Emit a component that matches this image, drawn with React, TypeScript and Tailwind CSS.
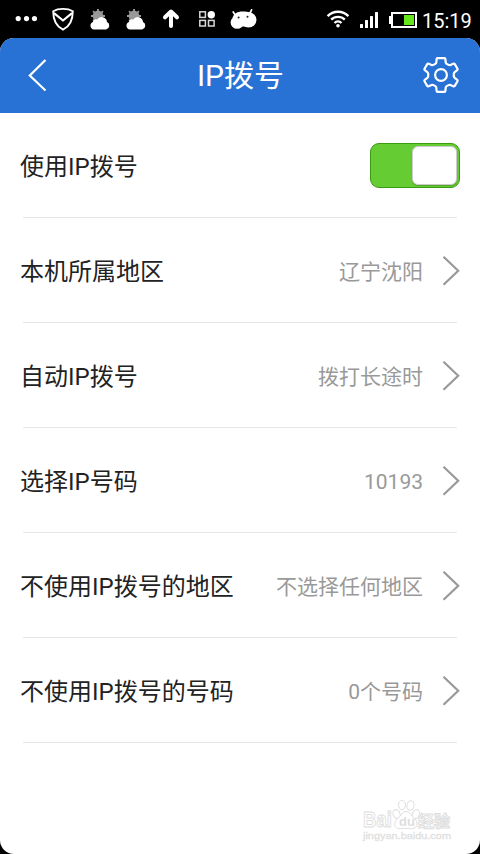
import { ReactNode } from "react";

type Row = {
  label: string;
  value?: string;
};

const rows: Row[] = [
  { label: "使用IP拨号" },
  { label: "本机所属地区", value: "辽宁沈阳" },
  { label: "自动IP拨号", value: "拨打长途时" },
  { label: "选择IP号码", value: "10193" },
  { label: "不使用IP拨号的地区", value: "不选择任何地区" },
  { label: "不使用IP拨号的号码", value: "0个号码" },
];

function WeatherIcon() {
  return (
    <svg width="20" height="22" viewBox="0 0 20 22" className="ml-4">
      <circle cx="8" cy="8" r="5.4" fill="#999" />
      <path
        d="M8 1v14M1 8h14M3.050 3.050l9.900 9.900M3.050 12.950l9.900-9.900"
        stroke="#999"
        strokeWidth="1.800"
      />
      <path
        d="M4 21.500a4 4 0 0 1-1.200-7.600 3.400 3.400 0 0 1 4.400-2.300 5.300 5.300 0 0 1 9.800 2.400 4 4 0 0 1-.8 7.500Z"
        fill="#fff"
      />
    </svg>
  );
}

function StatusBar() {
  return (
    <div className="flex h-[38px] items-center text-white">
      <svg width="22" height="6" viewBox="0 0 22 6" className="ml-[15px]" fill="#fff">
        <circle cx="3.2" cy="2.6" r="2.6" />
        <circle cx="11.500" cy="2.6" r="2.6" />
        <circle cx="19.500" cy="2.6" r="2.6" />
      </svg>
      <svg
        width="22"
        height="24"
        viewBox="0 0 22 24"
        className="ml-[15px]"
        fill="none"
        stroke="#fff"
        strokeWidth="1.9"
        strokeLinejoin="round"
      >
        <path d="M11 1.900C7.500 1.900 4 2.500 1.200 4.200 1.200 12.500 4.500 19.500 11 22.700 17.500 19.500 20.800 12.500 20.800 4.200 18 2.500 14.500 1.900 11 1.900Z" />
        <path d="M2 6.200 11 13.500l9-7.300" strokeWidth="2.200" />
      </svg>
      <WeatherIcon />
      <WeatherIcon />
      <svg
        width="18"
        height="22"
        viewBox="0 0 18 22"
        className="ml-4"
        fill="none"
        stroke="#fff"
        strokeWidth="4"
        strokeLinecap="round"
        strokeLinejoin="round"
      >
        <path d="M9 18V4M3 9.300 9 3.500l6 5.800" />
      </svg>
      <svg
        width="16"
        height="16"
        viewBox="0 0 16 16"
        className="ml-[19px]"
        fill="none"
        stroke="#d8d8d8"
        strokeWidth="1.5"
      >
        <rect x=".8" y=".8" width="5.600" height="5.600" />
        <rect x=".8" y="9.400" width="5.600" height="5.600" />
        <rect x="9.500" y="9.400" width="5.600" height="5.600" />
        <circle cx="12.300" cy="3.700" r="3.700" fill="#fff" stroke="none" />
      </svg>
      <svg width="28" height="22" viewBox="0 0 28 22" className="ml-[15px]">
        <path
          d="M3.200 4 5.200 7M21.600 1.800 20 5"
          stroke="#fff"
          strokeWidth="1.700"
          strokeLinecap="round"
        />
        <ellipse cx="7.200" cy="14.500" rx="6.600" ry="6.300" fill="#fff" />
        <ellipse cx="18.500" cy="11.800" rx="8" ry="7.600" fill="#fff" />
        <path
          d="M2.500 10C3.500 5.500 8 3.500 12 3.500s6.500.5 8 1V18.500H10Z"
          fill="#fff"
        />
        <circle cx="8.600" cy="9.400" r="1" fill="#222" />
        <circle cx="17.500" cy="8.800" r="1" fill="#222" />
      </svg>
      <svg
        width="24"
        height="18"
        viewBox="0 0 24 18"
        className="ml-auto"
        fill="none"
        stroke="#fff"
        strokeWidth="2.400"
      >
        <path d="M1.600 6.200a14.500 14.500 0 0 1 20.800 0" />
        <path d="M5.200 9.700a9.600 9.600 0 0 1 13.600 0" />
        <path d="M8.500 13a5 5 0 0 1 7 0" />
        <circle cx="12" cy="15.700" r="1.800" fill="#fff" stroke="none" />
      </svg>
      <svg width="19" height="16" viewBox="0 0 19 16" className="mt-[2px] ml-[10px]" fill="#fff">
        <rect x="0" y="12" width="3" height="4" rx=".5" />
        <rect x="5" y="8" width="3" height="8" rx=".5" />
        <rect x="10" y="4" width="3" height="12" rx=".5" />
        <rect x="15" y="0" width="3" height="16" rx=".5" />
      </svg>
      <svg width="28" height="16" viewBox="0 0 28 16" className="mt-[2px] ml-[10px]">
        <rect x="3" y="1" width="24" height="14" fill="none" stroke="#fff" strokeWidth="2" />
        <rect x="0" y="4" width="3" height="8" fill="#fff" />
        <rect x="15" y="3" width="10" height="10" fill="#66e51a" />
      </svg>
      <span className="mt-1 mr-[8px] ml-[5px] w-[50px] text-[20px] leading-6">15:19</span>
    </div>
  );
}

function Header() {
  return (
    <header className="flex h-[75px] items-center justify-between bg-[#2872d6] pr-5 pl-[27px] text-white">
      <svg
        width="32"
        height="34"
        viewBox="0 0 32 34"
        className="mb-[2px]"
        fill="none"
        stroke="#fff"
        strokeWidth="2.200"
      >
        <path d="M18.500 2 2.800 17.500l15.700 15" />
      </svg>
      <h1 className="text-[30px] leading-[72px]">IP拨号</h1>
      <svg
        width="38"
        height="38"
        viewBox="0 0 38 38"
        className="mb-[2px]"
        fill="none"
        stroke="#fff"
        strokeWidth="2.200"
        strokeLinejoin="round"
      >
        <circle cx="19" cy="19" r="5.900" />
        <path d="M15.500 2.200h7q.8 0 .9 1l.3 3.200q.1 1 1 1.500l1.800 1q1 .6 2 .1l2.800-1.300q.9-.4 1.500.4l2.700 4.600q.5.900-.3 1.500l-2.500 1.900q-.9.700-.9 1.600v2.600q0 .9.900 1.600l2.500 1.900q.8.600.3 1.500l-2.700 4.600q-.6.800-1.500.4l-2.800-1.300q-1-.5-2 .1l-1.800 1q-.9.500-1 1.500l-.3 3.200q-.1 1-.9 1h-7q-.8 0-.9-1l-.3-3.200q-.1-1-1-1.500l-1.800-1q-1-.6-2-.1l-2.800 1.300q-.9.400-1.500-.4l-2.700-4.600q-.5-.9.300-1.500l2.500-1.900q.9-.7.900-1.600v-2.600q0-.9-.9-1.600l-2.500-1.900q-.8-.6-.3-1.500l2.700-4.600q.6-.8 1.500-.4l2.800 1.300q1 .5 2-.1l1.800-1q.9-.5 1-1.500l.3-3.200q.1-1 .9-1Z" />
      </svg>
    </header>
  );
}

function Toggle() {
  return (
    <button
      type="button"
      role="switch"
      aria-checked="true"
      className="flex h-[45px] w-[90px] justify-end rounded-[9px] border border-[#3a9c10] bg-[#66cc33] pt-[2px] pr-[2px]"
    >
      <span className="h-[39px] w-[45px] rounded-[6px] border border-[#cccccc] bg-white shadow-[0_1px_1px_rgba(0,0,0,0.2)]" />
    </button>
  );
}

function SettingRow({ label, children }: { label: string; children: ReactNode }) {
  return (
    <li>
      <div className="flex h-[104px] items-center justify-between pr-5 pl-[20px]">
        <span className="pt-[3px] text-[24px] text-[#222222]">{label}</span>
        {children}
      </div>
      <div className="mx-[23px] h-px bg-[#e6e6e6]" />
    </li>
  );
}

function Watermark() {
  return (
    <div className="absolute right-[28px] bottom-[10px] w-[90px]">
      <svg width="90" height="48" viewBox="0 0 90 48" fill="#fff" stroke="#dedede" strokeWidth="1">
        <text
          x="1"
          y="31"
          fontSize="22"
          fontWeight="700"
          fontFamily="Liberation Sans"
          textLength="29"
          lengthAdjust="spacingAndGlyphs"
        >
          Bai
        </text>
        <ellipse cx="34.500" cy="18" rx="3.500" ry="4.600" transform="rotate(-20 34.500 18)" />
        <ellipse cx="40" cy="9" rx="3.500" ry="4.800" />
        <ellipse cx="48.500" cy="9.500" rx="3.500" ry="4.800" transform="rotate(10 48.500 9.500)" />
        <ellipse cx="54" cy="18" rx="3.500" ry="4.600" transform="rotate(20 54 18)" />
        <path d="M44 15.500c3 0 4.500 2.500 6.500 5s5 4 4.500 8-4.500 4.500-8 4q-3-.5-6 0c-3.500.6-8 0-8.300-4-.3-4 3-5.500 5-8s3.300-5 6.300-5Z" />
        <text
          x="37"
          y="30"
          fontSize="13"
          fontWeight="700"
          fontFamily="Liberation Sans"
          fill="#dedede"
          stroke="none"
        >
          du
        </text>
        <text x="56" y="31" fontSize="16" fontWeight="700">
          经验
        </text>
        <text
          x="1"
          y="43"
          fontSize="9.500"
          fontFamily="Liberation Sans"
          textLength="88"
          lengthAdjust="spacingAndGlyphs"
          fill="#e2e2e2"
          strokeWidth=".3"
        >
          jingyan.baidu.com
        </text>
      </svg>
    </div>
  );
}

export default function App() {
  return (
    <div className="h-[854px] w-[480px] overflow-hidden bg-black font-[Roboto,'Noto_Sans_CJK_SC',sans-serif]">
      <StatusBar />
      <main className="relative h-[816px] overflow-hidden rounded-[14px] bg-white">
        <Header />
        <ul>
          {rows.map((row) => (
            <SettingRow key={row.label} label={row.label}>
              {row.value ? (
                <div className="flex items-center">
                  <span className="pt-[5px] text-[21px] text-[#999999]">{row.value}</span>
                  <svg
                    width="18"
                    height="30"
                    viewBox="0 0 18 30"
                    className="mt-[2px] ml-[19px]"
                    fill="none"
                    stroke="#999999"
                    strokeWidth="2.200"
                  >
                    <path d="M1.500 .8 16.200 14.800 1.500 28.800" />
                  </svg>
                </div>
              ) : (
                <Toggle />
              )}
            </SettingRow>
          ))}
        </ul>
        <Watermark />
      </main>
    </div>
  );
}
